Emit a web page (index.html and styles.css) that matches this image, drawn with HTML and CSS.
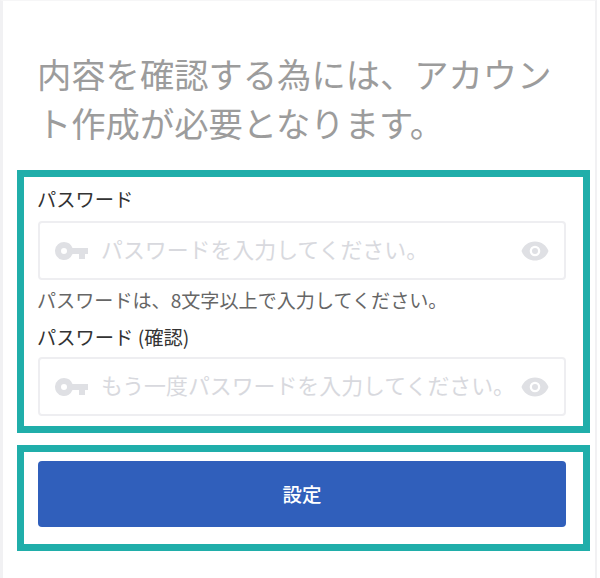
FILE: index.html
```html
<!DOCTYPE html>
<html lang="ja">
<head>
<meta charset="utf-8">
<title>パスワード設定</title>
<link rel="stylesheet" href="styles.css">
</head>
<body>
<main class="card">
  <h1 class="title">内容を確認する為には、アカウント作成が必要となります。</h1>
  <section class="box box-form">
    <label class="label">パスワード</label>
    <div class="field">
      <svg class="key" viewBox="0 0 34 20"><path fill-rule="evenodd" d="M10 1a9 9 0 0 1 8.500 6H34v6h-3v5h-6v-5h-6.500A9 9 0 1 1 10 1zm0 6a3 3 0 1 0 0 6 3 3 0 0 0 0-6z"/></svg>
      <span class="placeholder">パスワードを入力してください。</span>
      <svg class="eye" viewBox="0 0 28 20"><path fill-rule="evenodd" d="M14 .5c6.500 0 11.500 4 13.500 9.500-2 5.500-7 9.500-13.500 9.500S2.500 15.500.5 10C2.500 4.500 7.500.5 14 .5zm0 4.200a5.300 5.300 0 1 0 0 10.600 5.300 5.300 0 0 0 0-10.600zm0 2.300a3 3 0 1 1 0 6 3 3 0 0 1 0-6z"/></svg>
    </div>
    <p class="hint">パスワードは、8文字以上で入力してください。</p>
    <label class="label label-second">パスワード (確認)</label>
    <div class="field field-second">
      <svg class="key" viewBox="0 0 34 20"><path fill-rule="evenodd" d="M10 1a9 9 0 0 1 8.500 6H34v6h-3v5h-6v-5h-6.500A9 9 0 1 1 10 1zm0 6a3 3 0 1 0 0 6 3 3 0 0 0 0-6z"/></svg>
      <span class="placeholder">もう一度パスワードを入力してください。</span>
      <svg class="eye" viewBox="0 0 28 20"><path fill-rule="evenodd" d="M14 .5c6.500 0 11.500 4 13.500 9.500-2 5.500-7 9.500-13.500 9.500S2.500 15.500.5 10C2.500 4.500 7.500.5 14 .5zm0 4.200a5.300 5.300 0 1 0 0 10.600 5.300 5.300 0 0 0 0-10.600zm0 2.300a3 3 0 1 1 0 6 3 3 0 0 1 0-6z"/></svg>
    </div>
  </section>
  <section class="box box-action">
    <button class="submit" type="button">設定</button>
  </section>
</main>
</body>
</html>
```
FILE: styles.css
```css
* { box-sizing: border-box; }
html, body { margin: 0; height: 100%; }
body {
  background: #fff;
  font-family: "Noto Sans CJK JP", "Liberation Sans", sans-serif;
  overflow: hidden;
}
.card {
  width: 597px;
  height: 578px;
  padding: 48px 5px 0 14px;
  background: #fff;
  border-top: 1px solid #f6f6f7;
  border-left: 3px solid #f1f1f3;
  border-right: 2px solid #f1f1f3;
}
.title {
  margin: 0 0 23px;
  padding: 0 20px 0 20px;
  font-size: 34.3px;
  line-height: 49px;
  font-weight: 400;
  color: #9c9c9c;
}
.box {
  width: 573px;
  border: 7px solid #20aeaa;
}
.box-form {
  height: 263px;
  padding: 8px 17px 0 14px;
}
.box-action {
  height: 106px;
  margin-top: 12px;
  padding: 9px 17px 0 14px;
}
.label {
  display: block;
  margin-left: -1px;
  font-size: 19.3px;
  line-height: 28px;
  color: #333;
}
.label-second { margin-top: 12px; line-height: 27px; }
.field {
  display: flex;
  align-items: center;
  height: 59px;
  margin-top: 8px;
  padding: 0 15px 0 14px;
  border: 2px solid #eeeef1;
  border-radius: 4px;
  background: #fff;
}
.field-second { margin-top: 6px; }
.key { width: 34px; height: 20px; flex: none; fill: #dfe0e4; }
.eye { width: 28px; height: 20px; flex: none; fill: #dfe0e4; margin-left: auto; }
.placeholder {
  margin-left: 13px;
  padding-bottom: 4px;
  font-size: 21.9px;
  color: #d8d9de;
  white-space: nowrap;
}
.hint {
  margin: 8px 0 0 -1px;
  font-size: 19.1px;
  line-height: 24px;
  color: #666;
}
.submit {
  display: block;
  width: 100%;
  height: 66px;
  padding-bottom: 2px;
  border: 0;
  border-radius: 4px;
  background: #305fbb;
  color: #fff;
  font-family: inherit;
  font-size: 19.5px;
  font-weight: 500;
}
```
